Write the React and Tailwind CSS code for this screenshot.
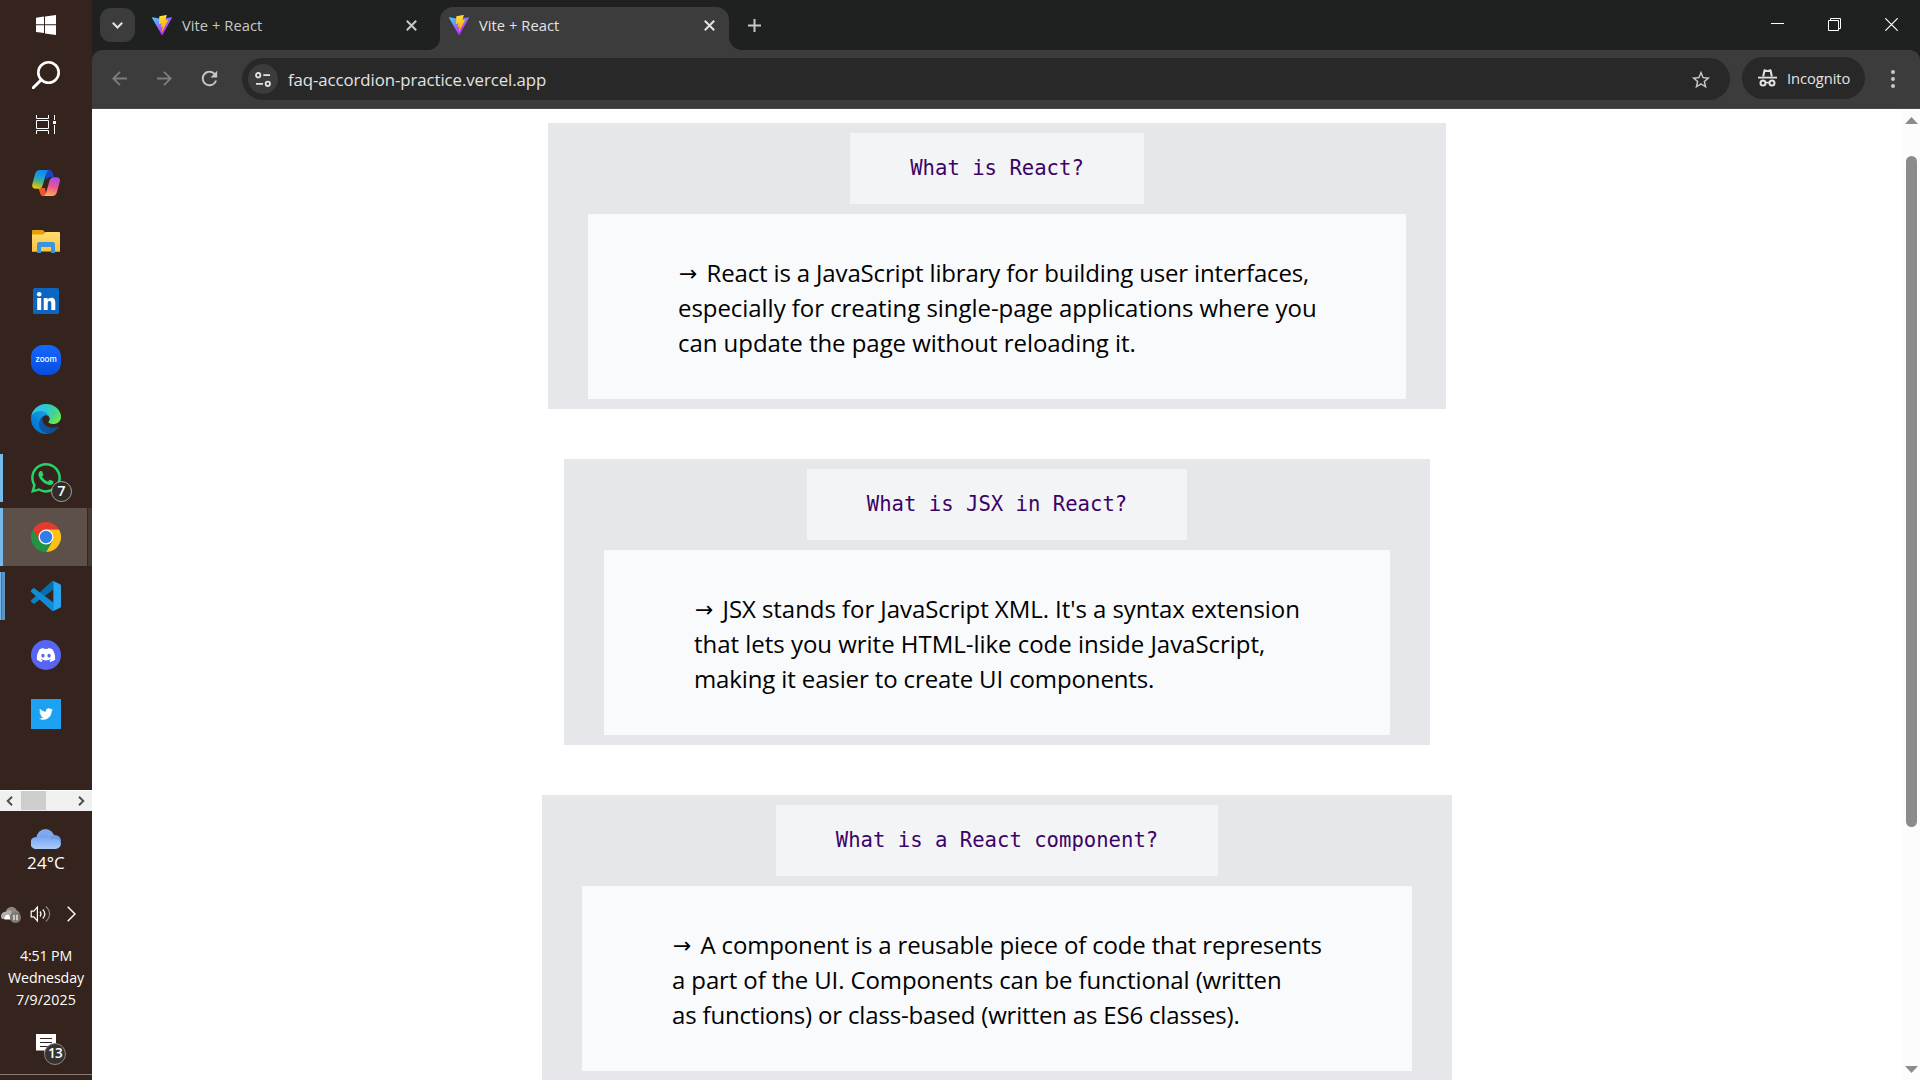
import React from "react";
import { FaTwitter, FaDiscord } from "react-icons/fa";
import { MdStarBorder, MdRefresh } from "react-icons/md";

const faqs = [
  {
    card: "w-[898px]",
    question: "What is React?",
    lines: [
      ["React is a JavaScript library for building user interfaces,", "tracking-[-0.15px]"],
      ["especially for creating single-page applications where you", "tracking-[-0.05px]"],
      ["can update the page without reloading it.", "tracking-[-0.05px]"],
    ],
  },
  {
    card: "w-[866px]",
    question: "What is JSX in React?",
    lines: [
      ["JSX stands for JavaScript XML. It's a syntax extension", "tracking-[-0.055px]"],
      ["that lets you write HTML-like code inside JavaScript,", "tracking-[-0.026px]"],
      ["making it easier to create UI components.", "tracking-[-0.125px]"],
    ],
  },
  {
    card: "w-[910px]",
    question: "What is a React component?",
    lines: [
      ["A component is a reusable piece of code that represents", "tracking-[-0.155px]"],
      ["a part of the UI. Components can be functional (written", "tracking-[-0.12px]"],
      ["as functions) or class-based (written as ES6 classes).", "tracking-[-0.175px]"],
    ],
  },
];

function FaqCard({ card, question, lines }) {
  return (
    <section className={`${card} shrink-0 bg-gray-200 px-10 py-[10px] flex flex-col items-center gap-[10px]`}>
      <h2 className="h-[71px] px-[60px] pb-[1px] flex items-center bg-gray-100 text-[#3c0366] font-['DejaVu_Sans_Mono',monospace] text-[20.6px] whitespace-pre">
        {question}
      </h2>
      <div className="w-full bg-gray-50 pl-[90px] pt-[41px] pb-[39px] text-[24px] leading-[35px] text-black whitespace-nowrap">
        {lines.map(([text, tracking], i) => (
          <p key={text} className={`h-[35px] flex ${tracking}`}>
            {i === 0 && (
              <span className="w-[28.5px] pl-[1px] pt-[1px] font-['DejaVu_Sans',sans-serif] text-[22px]">→</span>
            )}
            <span>{text}</span>
          </p>
        ))}
      </div>
    </section>
  );
}

function ViteLogo() {
  return (
    <svg className="size-5 shrink-0" viewBox="0 0 256 257">
      <defs>
        <linearGradient id="viteA" x1="-.8%" x2="57.6%" y1="7.7%" y2="78.4%">
          <stop offset="0%" stopColor="#41D1FF" />
          <stop offset="100%" stopColor="#BD34FE" />
        </linearGradient>
        <linearGradient id="viteB" x1="43.4%" x2="50.3%" y1="2.2%" y2="89%">
          <stop offset="0%" stopColor="#FFEA83" />
          <stop offset="8.3%" stopColor="#FFDD35" />
          <stop offset="100%" stopColor="#FFA800" />
        </linearGradient>
      </defs>
      <path fill="url(#viteA)" d="M255.153 37.938L134.897 252.976c-2.483 4.44-8.862 4.466-11.382.048L.875 37.958c-2.746-4.814 1.371-10.646 6.827-9.67l120.385 21.517a6.537 6.537 0 0 0 2.322-.004l117.867-21.483c5.438-.991 9.574 4.796 6.877 9.62Z" />
      <path fill="url(#viteB)" d="M185.432.063L96.44 17.501a3.268 3.268 0 0 0-2.634 3.014l-5.474 92.456a3.268 3.268 0 0 0 3.997 3.378l24.777-5.718c2.318-.535 4.413 1.507 3.936 3.838l-7.361 36.047c-.495 2.426 1.782 4.5 4.151 3.78l15.304-4.649c2.372-.72 4.652 1.36 4.15 3.788l-11.698 56.621c-.732 3.542 3.979 5.473 5.943 2.437l1.313-2.028l72.516-144.72c1.215-2.423-.88-5.186-3.54-4.672l-25.505 4.922c-2.396.462-4.435-1.77-3.759-4.114l16.646-57.705c.677-2.35-1.37-4.583-3.769-4.113Z" />
    </svg>
  );
}

function TabClose({ color }) {
  return (
    <svg className="size-[11px] shrink-0" viewBox="0 0 11 11" fill="none" stroke={color} strokeWidth="2">
      <path d="M.8.8l9.4 9.4M10.2.8L.8 10.2" />
    </svg>
  );
}

function CopilotIcon() {
  return (
    <svg className="w-7 h-[26px] mt-[2px]" viewBox="0 0 28 26">
      <defs>
        <linearGradient id="copA" x1="0.5" y1="0" x2="0.3" y2="1">
          <stop offset="0" stopColor="#1687e6" />
          <stop offset="0.35" stopColor="#14a0e0" />
          <stop offset="0.65" stopColor="#5bb56a" />
          <stop offset="0.95" stopColor="#e8c70c" />
        </linearGradient>
        <linearGradient id="copB" x1="0.6" y1="0" x2="0.4" y2="1">
          <stop offset="0" stopColor="#a04df0" />
          <stop offset="0.5" stopColor="#ee5590" />
          <stop offset="1" stopColor="#ffab52" />
        </linearGradient>
      </defs>
      <path fill="#1746c4" d="M13 0h4.500c1.800 0 2.800 1 3.300 2.700L22 7h-3.500c-2 0-3.300 1-4 3z" />
      <path fill="#f2542f" d="M6.500 18H13l1.500 8h-3.200c-1.600 0-2.700-1-3.100-2.600z" />
      <path fill="url(#copA)" d="M7.800 0H17c-1.600.6-2.300 2-2.900 4l-3.500 11.500c-.6 2-1.700 3.300-4 3.300H3.500C.8 18.800-.3 17 .3 14.200L3.200 3.800C4 1.200 5.500 0 7.800 0z" />
      <path fill="url(#copB)" d="M20.500 26H11.500c1.500-.6 2.200-2 2.800-4l3.300-11.500c.6-2 1.800-3.300 4-3.300h3c2.700 0 3.800 1.800 3.200 4.600l-2.900 10.400c-.8 2.600-2.200 3.800-4.400 3.800z" />
    </svg>
  );
}

function FolderIcon() {
  return (
    <svg className="w-7 h-[23px] mt-[3px]" viewBox="0 0 28 23">
      <defs>
        <linearGradient id="fold" x1="0" y1="0" x2="0" y2="1">
          <stop offset="0" stopColor="#ffdc70" />
          <stop offset="1" stopColor="#f8c441" />
        </linearGradient>
      </defs>
      <path fill="#e3a008" d="M0 1a1 1 0 0 1 1-1h10l2 2.500V6H0z" />
      <path fill="url(#fold)" d="M0 4.500h11L13.500 2H27a1 1 0 0 1 1 1v18.500H0z" />
      <path fill="#3c94dc" d="M5 23V14.200A2.200 2.200 0 0 1 7.200 12h13.600a2.200 2.200 0 0 1 2.200 2.200V23h-4v-6H9v6z" />
      <path fill="#d49e26" d="M0 21h5v1H0zM23 21h5v1h-5z" />
    </svg>
  );
}

function LinkedInIcon() {
  return (
    <svg className="size-[26px] mt-[2px]" viewBox="0 0 26 26">
      <rect width="26" height="26" rx="1.500" fill="#0a66c2" />
      <g fill="#fff">
        <circle cx="6.200" cy="6.200" r="2.300" />
        <path d="M4.200 10h4v12h-4zM10.700 10h3.800v1.700c.7-1.200 2-2 3.800-2 3.200 0 4 2.100 4 5V22h-4v-6.400c0-1.500-.2-2.700-1.700-2.700-1.600 0-1.900 1.200-1.900 2.700V22h-4z" />
      </g>
    </svg>
  );
}

function ZoomIcon() {
  return (
    <div className="size-[30px] rounded-[12px] bg-linear-to-t from-[#0a4be0] to-[#1568ff] flex justify-center items-center pb-[1.500px] font-['Inter',sans-serif] font-medium text-[8.200px] leading-none text-white">
      zoom
    </div>
  );
}

function EdgeIcon() {
  return (
    <svg className="size-[30px]" viewBox="0 0 256 256">
      <defs>
        <linearGradient id="edA" x1="63.300" y1="84" x2="241.700" y2="84" gradientTransform="matrix(1 0 0 -1 0 266)" gradientUnits="userSpaceOnUse">
          <stop offset="0" stopColor="#0c59a4" />
          <stop offset="1" stopColor="#114a8b" />
        </linearGradient>
        <linearGradient id="edB" x1="157.300" y1="161.400" x2="46" y2="40.100" gradientTransform="matrix(1 0 0 -1 0 266)" gradientUnits="userSpaceOnUse">
          <stop offset="0" stopColor="#1b9de2" />
          <stop offset=".2" stopColor="#1595df" />
          <stop offset=".7" stopColor="#0680d7" />
          <stop offset="1" stopColor="#0078d4" />
        </linearGradient>
        <radialGradient id="edC" cx="0.100" cy="0.200" r="1">
          <stop offset="0" stopColor="#35c1f1" />
          <stop offset=".4" stopColor="#2cc6d8" />
          <stop offset=".75" stopColor="#45d48e" />
          <stop offset="1" stopColor="#66eb4a" />
        </radialGradient>
      </defs>
      <g transform="translate(-4.600 -5)">
        <path fill="url(#edA)" d="M235.700 195.500a93.700 93.700 0 0 1-10.600 4.700 101.900 101.900 0 0 1-35.900 6.400c-47.300 0-88.500-32.500-88.500-74.300a31.500 31.500 0 0 1 16.400-27.300c-42.800 1.800-53.800 46.400-53.800 72.500 0 73.900 68.100 81.400 82.800 81.400 7.900 0 19.800-2.300 27-4.600l1.300-.4a128.300 128.300 0 0 0 66.600-52.800 4 4 0 0 0-5.300-5.600z" />
        <path fill="url(#edB)" d="M110.300 246.300A79.200 79.200 0 0 1 87.600 225a80.700 80.700 0 0 1 29.500-120c3.200-1.500 8.500-4.100 15.600-4a32.400 32.400 0 0 1 25.700 13 31.900 31.900 0 0 1 6.300 18.700c0-.2 24.500-79.600-80-79.600-43.900 0-80 41.600-80 78.200a130.200 130.200 0 0 0 12.100 56 128 128 0 0 0 156.400 67 75.500 75.500 0 0 1-62.800-8z" />
        <path fill="url(#edC)" d="M156.900 153.800c-.8 1-3.400 2.500-3.400 5.700 0 2.600 1.700 5.200 4.800 7.300 14.300 10 41.400 8.600 41.500 8.600a59.600 59.600 0 0 0 30.300-8.300 61.400 61.400 0 0 0 30.400-52.900c.3-22.400-8-37.300-11.300-43.900C228 28.600 182.300 4.900 132.600 4.900a128 128 0 0 0-128 126.200c.5-36.500 36.800-66 80-66 3.500 0 23.500.3 42 10a72.600 72.600 0 0 1 30.900 29.300c6.100 10.600 7.200 24.100 7.200 29.500s-2.700 13.300-7.800 19.900z" />
      </g>
    </svg>
  );
}

function ChromeIcon() {
  return (
    <svg className="size-[30px]" viewBox="0 0 48 48">
      <path fill="#e33b2e" d="M3.215 12A24 24 0 0 1 44.785 12L24 12L24 24L13.608 30z" />
      <path fill="#fbc116" d="M44.785 12A24 24 0 0 1 24 48L34.392 30L24 24V12z" />
      <path fill="#229342" d="M24 48A24 24 0 0 1 3.215 12L13.608 30L24 24L34.392 30z" />
      <circle cx="24" cy="24" r="12" fill="#fff" />
      <circle cx="24" cy="24" r="9.900" fill="#2f7de9" />
    </svg>
  );
}

function VsCodeIcon() {
  return (
    <svg className="size-[30px]" viewBox="0 0 24 24">
      <path fill="#0b80c6" d="M23.150 2.587L18.210.21a1.494 1.494 0 0 0-1.705.29l-9.460 8.630-4.120-3.128a.999.999 0 0 0-1.276.057L.327 7.261A1 1 0 0 0 .326 8.740L3.899 12 .326 15.260a1 1 0 0 0 .001 1.479L1.650 17.940a.999.999 0 0 0 1.276.057l4.120-3.128 9.460 8.630a1.492 1.492 0 0 0 1.704.29l4.942-2.377A1.500 1.500 0 0 0 24 20.060V3.939a1.500 1.500 0 0 0-.85-1.352zm-5.146 14.861L10.826 12l7.178-5.448v10.896z" />
      <path fill="#0668a8" d="M7.045 9.130L16.505.5 18 .2v6.352L10.826 12z" opacity=".75" />
      <path fill="#1292dc" d="M1.650 6.060a1 1 0 0 1 1.276-.057L18.004 17.448V23.800a1.490 1.490 0 0 1-1.500-.3L.327 8.740a1 1 0 0 1 0-1.480z" opacity=".7" />
      <path fill="#28a6f2" d="M18.004.15l5.146 2.437A1.500 1.500 0 0 1 24 3.939V20.060a1.500 1.500 0 0 1-.85 1.352L18.004 23.850z" />
    </svg>
  );
}

function DiscordIcon() {
  return (
    <div className="size-[30px] rounded-full bg-[#5865f2] flex justify-center items-center">
      <FaDiscord className="size-[20px] text-white" />
    </div>
  );
}

function TwitterIcon() {
  return (
    <div className="size-[30px] bg-[#1da1f2] flex justify-center items-center">
      <FaTwitter className="size-[14px] text-white" />
    </div>
  );
}

function WhatsAppIcon() {
  return (
    <div className="relative size-[30px]">
      <svg className="size-[30px]" viewBox="31 32 449 449">
        <path fill="#25d366" d="M411.900 97.100C369.900 55 314.100 32 254.900 32 132.500 32 33 131.500 33 253.900c0 39.100 10.200 77.300 29.600 111L31 480l117.700-30.900c32.400 17.700 68.900 27 106.100 27h.1c122.300 0 224.100-99.500 224.100-221.900 0-59.300-25.200-115-67.100-157.100zm-157 341.600c-33.200 0-65.700-8.900-94-25.700l-6.700-4-69.800 18.300L103 359.200l-4.400-7c-18.500-29.400-28.200-63.300-28.200-98.200 0-101.700 82.800-184.500 184.600-184.500 49.300 0 95.600 19.200 130.400 54.100 34.800 34.900 56.200 81.200 56.100 130.500 0 101.800-84.900 184.600-186.600 184.600zm101.200-138.200c-5.500-2.800-32.800-16.200-37.900-18-5.100-1.900-8.800-2.800-12.500 2.800-3.700 5.600-14.300 18-17.600 21.800-3.200 3.700-6.500 4.200-12 1.400-32.600-16.300-54-29.100-75.500-66-5.700-9.800 5.700-9.100 16.300-30.300 1.800-3.700.9-6.900-.5-9.700-1.400-2.800-12.500-30.100-17.100-41.200-4.500-10.800-9.100-9.300-12.500-9.500-3.200-.2-6.900-.2-10.600-.2-3.700 0-9.700 1.400-14.800 6.900-5.100 5.600-19.400 19-19.400 46.300 0 27.300 19.900 53.700 22.600 57.400 2.800 3.700 39.100 59.700 94.800 83.800 35.200 15.200 49 16.500 66.600 13.900 10.700-1.600 32.800-13.400 37.400-26.400 4.600-13 4.600-24.100 3.200-26.400-1.300-2.500-5-3.900-10.500-6.600z" />
      </svg>
      <span className="absolute left-[20px] top-[18px] size-[21px] rounded-full border border-[#a9a39f] bg-[#2f2c2a] flex items-center justify-center font-['Open_Sans',sans-serif] font-semibold text-[14.500px] leading-none text-white">
        7
      </span>
    </div>
  );
}

const apps = [
  { name: "copilot", Icon: CopilotIcon },
  { name: "files", Icon: FolderIcon },
  { name: "linkedin", Icon: LinkedInIcon },
  { name: "zoom", Icon: ZoomIcon },
  { name: "edge", Icon: EdgeIcon },
  { name: "whatsapp", Icon: WhatsAppIcon, state: "open" },
  { name: "chrome", Icon: ChromeIcon, state: "active" },
  { name: "vscode", Icon: VsCodeIcon, state: "multi" },
  { name: "discord", Icon: DiscordIcon },
  { name: "twitter", Icon: TwitterIcon },
];

function AppCell({ Icon, state }) {
  return (
    <div className="h-[59px] pt-px flex">
      <div className="w-[5px] shrink-0 flex">
        {state === "open" && <i className="w-[3px] h-[48px] mt-[5px] bg-[#76b9ed]" />}
        {state === "active" && (
          <>
            <i className="w-[3px] bg-[#76b9ed]" />
            <i className="w-[2px] bg-[#5c5048]" />
          </>
        )}
        {state === "multi" && (
          <>
            <i className="w-px h-[48px] mt-[5px] bg-[#76b9ed]" />
            <i className="w-px h-[48px] mt-[5px] bg-[#4a7397]" />
            <i className="w-[3px] h-[48px] mt-[5px] bg-[#5c94c4]" />
          </>
        )}
      </div>
      <div className={`w-[82px] flex justify-center pt-[14px] ${state === "active" ? "bg-[#5c5048]" : ""}`}>
        <Icon />
      </div>
      {state === "active" && <div className="flex-1 border-l border-[#332620] bg-[#453a33]" />}
    </div>
  );
}

function Taskbar() {
  return (
    <aside className="w-[92px] h-full shrink-0 bg-[#35241d] flex flex-col text-white font-['Open_Sans',sans-serif]">
      <div className="h-[153px] flex flex-col items-center pt-[15px]">
        <svg className="size-5" viewBox="0 0 20 20" fill="#fff">
          <path d="M0 2.700L8 1.600V9.300H0zM9 1.500L20 0v9.300H9zM0 10.300h8V18L0 16.900zM9 10.300h11V20L9 18.400z" />
        </svg>
        <svg className="size-7 mt-[26px]" viewBox="0 0 28 28" fill="none" stroke="#fff">
          <circle cx="16.500" cy="11.500" r="10.200" strokeWidth="2.600" />
          <path d="M9.300 18.700L1.200 26.800" strokeWidth="3" strokeLinecap="round" />
        </svg>
        <svg className="w-5 h-[19px] mt-[26px]" viewBox="0 0 20 19" fill="none" stroke="#fff">
          <path d="M.5 0v3.500h12V0M.5 5.500h12v8H.5zM.5 19v-3.500h12V19M18.500 0v5M18.500 10v9" />
          <path d="M17 6h3v3h-3z" fill="#fff" stroke="none" />
        </svg>
      </div>

      <nav className="h-[637px] flex flex-col">
        {apps.map((a) => (
          <AppCell key={a.name} {...a} />
        ))}
      </nav>

      <div className="h-[21px] flex items-stretch bg-[#f0f0f0] border-t border-white">
        <div className="w-[21px] flex items-center justify-center">
          <svg className="w-[7px] h-[10px] ml-[-2px]" viewBox="0 0 7 10" fill="none" stroke="#505050" strokeWidth="2">
            <path d="M6 .7L1.700 5 6 9.300" />
          </svg>
        </div>
        <div className="w-[25px] bg-[#cdcdcd] mb-px" />
        <div className="flex-1" />
        <div className="w-[21px] flex items-center justify-center">
          <svg className="w-[7px] h-[10px]" viewBox="0 0 7 10" fill="none" stroke="#505050" strokeWidth="2">
            <path d="M1 .7L5.300 5 1 9.300" />
          </svg>
        </div>
      </div>

      <div className="h-[79px] flex flex-col items-center pt-[18px]">
        <svg className="w-[30px] h-5" viewBox="0 0 30 20">
          <defs>
            <linearGradient id="cloud" x1="0" y1="0" x2="0" y2="1">
              <stop offset="0" stopColor="#6f9fee" />
              <stop offset="1" stopColor="#a9ccfb" />
            </linearGradient>
          </defs>
          <circle cx="14.500" cy="9" r="9" fill="#7ea8f0" />
          <circle cx="24" cy="12" r="6" fill="#6f9be8" />
          <path fill="url(#cloud)" d="M6 20a6 6 0 1 1 1.500-11.500A7.500 7.500 0 0 1 20.500 11a6.200 6.200 0 0 1 9.500 3.500A5.600 5.600 0 0 1 24.500 20z" />
        </svg>
        <div className="text-[17px] leading-[24px] mt-[2px] tracking-[0.1px]">24°C</div>
      </div>

      <div className="h-[48px] flex items-center">
        <svg className="w-[21px] h-[18px]" viewBox="0 0 21 18">
          <path fill="#8d8681" d="M6 9.500a5.800 5.800 0 0 1 11-3.700c2.500.3 3 3 2 5.200H8z" />
          <path fill="#b4aeaa" d="M1 12a4.600 4.600 0 0 1 5.200-5.200c1.600-2 4.300-1.800 5.600-.3L10 14H2z" />
          <path fill="#fff" d="M4.500 14.500a3.500 3.500 0 0 1 4.300-4.500L11 14.500z" />
          <circle cx="15.500" cy="12.500" r="5.500" fill="#7b7570" />
          <path d="M14 9.800v5.400M17 9.800v5.400" stroke="#fff" strokeWidth="1.200" />
        </svg>
        <svg className="w-[21px] h-[18px] ml-[9px]" viewBox="0 0 21 18" fill="none" stroke="#fff" strokeWidth="1.200">
          <path d="M1.200 6.200h2.600L7.400 2v14l-3.600-4.200H1.200z" />
          <path d="M10 6.500c1.300 1.600 1.300 3.400 0 5M12.800 4.500c2.500 2.700 2.500 6.300 0 9" />
          <path d="M15.800 1.500c5 4.500 5 10.500 0 15" stroke="#8b827d" />
        </svg>
        <svg className="w-[9px] h-4 ml-4" viewBox="0 0 9 16" fill="none" stroke="#fff" strokeWidth="1.400">
          <path d="M.7.7L8 8 .7 15.300" />
        </svg>
      </div>

      <div className="h-[90px] pt-[7px] flex flex-col items-center text-[14.200px] leading-[22px]">
        <span className="tracking-[-0.15px]">4:51 PM</span>
        <span className="tracking-[-0.1px]">Wednesday</span>
        <span className="tracking-[0.1px]">7/9/2025</span>
      </div>

      <div className="flex-1 flex justify-center pt-[6px]">
        <div className="relative size-5">
          <svg className="size-5" viewBox="0 0 20 20">
            <path fill="#fff" d="M0 0h20v16.500h-8L8.500 20v-3.500H0z" />
            <path d="M4 4.500h12M4 8.500h12M4 12.500h8" stroke="#35241d" />
          </svg>
          <span className="absolute left-[8px] top-[9px] size-[22px] rounded-full border border-[#8c8682] bg-[#363433] flex items-center justify-center font-semibold text-[13.500px] leading-none tracking-[-0.6px]">
            13
          </span>
        </div>
      </div>
      <div className="h-[6px] border-t border-[#867c78]" />
    </aside>
  );
}

function TabStrip() {
  return (
    <div className="h-[50px] bg-[#1f2120] flex text-[14.700px]">
      <button className="mt-2 ml-2 w-[35px] h-[34px] rounded-[11px] bg-[#3c3c3c] flex items-center justify-center">
        <svg className="w-[11px] h-[7px]" viewBox="0 0 11 7" fill="none" stroke="#e3e3e3" strokeWidth="2">
          <path d="M.8.8l4.700 4.700L10.200.8" />
        </svg>
      </button>
      <div className="w-[293px] flex items-center pl-[17px] text-[#c7c7c7]">
        <ViteLogo />
        <span className="ml-[10px] flex-1 tracking-[0.05px]">Vite + React</span>
        <TabClose color="#c7c7c7" />
        <span className="w-[11px]" />
      </div>
      <div className="w-3 self-end h-3 bg-[#3c3c3c]">
        <div className="size-full bg-[#1f2120] rounded-br-[12px]" />
      </div>
      <div className="mt-[7px] w-[289px] rounded-t-[13px] bg-[#3c3c3c] flex items-center pl-[9px] pb-[7px] text-[#e3e3e3]">
        <ViteLogo />
        <span className="ml-[10px] flex-1 tracking-[0.05px]">Vite + React</span>
        <TabClose color="#e3e3e3" />
        <span className="w-[14px]" />
      </div>
      <div className="w-[13px] self-end h-[13px] bg-[#3c3c3c]">
        <div className="size-full bg-[#1f2120] rounded-bl-[13px]" />
      </div>
      <svg className="w-[13px] h-[13px] ml-[6px] mt-[19px]" viewBox="0 0 13 13" stroke="#c7c7c7" strokeWidth="2">
        <path d="M6.500 0v13M0 6.500h13" />
      </svg>
      <div className="flex-1" />
      <div className="flex pt-[18px] pr-[22px] gap-[44px]">
        <svg className="size-[13px]" viewBox="0 0 13 13" stroke="#fff">
          <path d="M0 5.500h13" />
        </svg>
        <svg className="size-[13px]" viewBox="0 0 13 13" fill="none" stroke="#fff">
          <path d="M.5 2.500h10v10H.5zM2.500 2.500v-2h10v10h-2" />
        </svg>
        <svg className="size-[13px]" viewBox="0 0 13 13" stroke="#fff" strokeWidth="1.200">
          <path d="M.3.3l12.400 12.400M12.700.3L.3 12.700" />
        </svg>
      </div>
    </div>
  );
}

function Toolbar() {
  return (
    <div className="bg-[#1f2120]">
      <div className="h-[59px] rounded-t-[10px] bg-[#3c3c3c] border-b border-[#4a4848] flex items-start text-[#e3e3e3]">
        <svg className="w-[15px] h-[15px] ml-5 mt-[21px]" viewBox="0 0 15 15" fill="none" stroke="#7d7d7d" strokeWidth="1.800">
          <path d="M15 7.500H1.500M8 .8L1.300 7.500 8 14.200" />
        </svg>
        <svg className="w-[15px] h-[15px] ml-[30px] mt-[21px]" viewBox="0 0 15 15" fill="none" stroke="#7d7d7d" strokeWidth="1.800">
          <path d="M0 7.500h13.500M7 .8l6.700 6.700L7 14.200" />
        </svg>
        <MdRefresh className="size-[23px] ml-[26px] mt-[17px] text-[#c7c7c7]" />
        <div className="ml-[21px] mt-2 w-[1488px] h-[42px] rounded-full bg-[#282828] flex items-center pl-[6px] pr-[18px]">
          <div className="size-[30px] rounded-full bg-[#3c3c3c] flex items-center justify-center">
            <svg className="w-4 h-[15px]" viewBox="0 0 16 15" fill="none" stroke="#e3e3e3" strokeWidth="1.800">
              <circle cx="3.200" cy="3.200" r="2.200" />
              <circle cx="12.800" cy="11.800" r="2.200" />
              <path d="M8.300 3.200H15M1 11.800h7" />
            </svg>
          </div>
          <span className="ml-[10px] flex-1 text-[16.800px] tracking-[-0.069px] pt-px">faq-accordion-practice.vercel.app</span>
          <MdStarBorder className="size-[22px] mt-px text-[#c7c7c7]" />
        </div>
        <div className="ml-3 mt-[7px] w-[123px] h-[42px] rounded-full bg-[#282828] flex items-center pl-4">
          <svg className="w-[19px] h-[18px]" viewBox="0 0 19 18" fill="none" stroke="#e3e3e3">
            <path d="M5.200 7.500L6.500 1.200l3 .9 3-.9 1.300 6.300" strokeWidth="2" strokeLinejoin="round" />
            <path d="M0 8.600h19" strokeWidth="1.800" />
            <circle cx="5" cy="14" r="2.500" strokeWidth="2" />
            <circle cx="14" cy="14" r="2.500" strokeWidth="2" />
            <path d="M7.500 13.600h4" strokeWidth="1.600" />
          </svg>
          <span className="ml-[10px] text-[14.700px] tracking-[-0.05px] pt-px">Incognito</span>
        </div>
        <div className="ml-[26px] mt-[20px] flex flex-col gap-[3px]">
          <i className="size-1 rounded-full bg-[#c7c7c7]" />
          <i className="size-1 rounded-full bg-[#c7c7c7]" />
          <i className="size-1 rounded-full bg-[#c7c7c7]" />
        </div>
      </div>
    </div>
  );
}

export default function App() {
  return (
    <div className="w-[1920px] h-[1080px] overflow-hidden flex bg-white font-['Open_Sans',sans-serif]">
      <Taskbar />
      <div className="flex-1 min-w-0 flex flex-col">
        <TabStrip />
        <Toolbar />
        <div className="flex-1 min-h-0 flex">
          <main className="w-[1810px] overflow-hidden flex flex-col items-center gap-[50px] pt-[14px]">
            {faqs.map((f) => (
              <FaqCard key={f.question} {...f} />
            ))}
          </main>
          <div className="w-[18px] bg-[#fcfcfc] flex flex-col items-center pl-[1px]">
            <svg className="w-[13px] h-[7px] mt-2" viewBox="0 0 13 7" fill="#8b8b8b">
              <path d="M6.500 0L13 7H0z" />
            </svg>
            <div className="mt-8 w-[11px] h-[671px] rounded-full bg-[#8b8b8b]" />
            <div className="flex-1" />
            <svg className="w-[13px] h-[7px] mb-[7px]" viewBox="0 0 13 7" fill="#8b8b8b">
              <path d="M0 0h13L6.500 7z" />
            </svg>
          </div>
        </div>
      </div>
    </div>
  );
}
